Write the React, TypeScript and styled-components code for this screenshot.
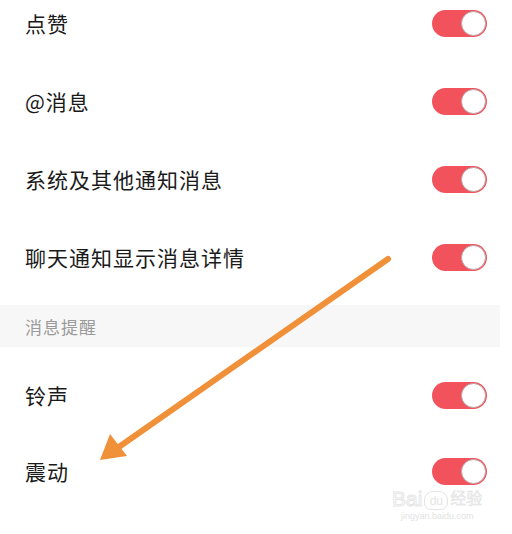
import styled, { createGlobalStyle } from 'styled-components';

const GlobalStyle = createGlobalStyle`
  html, body {
    margin: 0;
    padding: 0;
    background: #ffffff;
  }
  body {
    font-family: "Noto Sans CJK SC", "Noto Sans", sans-serif;
  }
`;

const Page = styled.div`
  position: relative;
  width: 512px;
  height: 534px;
  overflow: hidden;
  background: #ffffff;
`;

const List = styled.div`
  display: flex;
  flex-direction: column;
  margin-top: -16px;
`;

const Row = styled.div<{ $h?: number }>`
  height: ${p => p.$h ?? 78}px;
  display: flex;
  align-items: center;
  justify-content: space-between;
  padding: 0 25px 0 25px;
`;

const Label = styled.span`
  font-size: 21px;
  color: #1a1a1a;
  letter-spacing: 1px;
`;

const SectionHeader = styled.div`
  width: 500px;
  height: 42px;
  margin: 9px 0 10px;
  box-sizing: border-box;
  padding-left: 25px;
  display: flex;
  align-items: center;
  background: #f7f7f7;
  font-size: 17px;
  color: #9a9a9a;
  letter-spacing: 1px;
`;

const Track = styled.div`
  width: 55px;
  height: 27px;
  border-radius: 14px;
  background: #f2525b;
  display: flex;
  align-items: center;
  justify-content: flex-end;
  box-sizing: border-box;
  padding-right: 1px;
`;

const Knob = styled.div`
  width: 25px;
  height: 25px;
  border-radius: 50%;
  background: #ffffff;
  box-sizing: border-box;
  border: 1px solid #b9a6a8;
`;

const Arrow = styled.svg`
  position: absolute;
  left: 0;
  top: 0;
  pointer-events: none;
`;

const Watermark = styled.div`
  position: absolute;
  left: 392px;
  top: 488px;
  display: flex;
  flex-direction: column;
  align-items: center;
  font-family: "Liberation Sans", "Noto Sans CJK SC", sans-serif;
`;

const MarkTop = styled.div`
  display: flex;
  align-items: flex-end;
  gap: 2px;
  font-size: 21px;
  line-height: 22px;
  color: #ffffff;
  -webkit-text-stroke: 1px #e6e6e6;
`;

const Paw = styled.span`
  display: inline-flex;
  align-items: center;
  justify-content: center;
  width: 22px;
  height: 17px;
  border-radius: 9px 9px 7px 7px;
  border: 1px solid #e4e4e4;
  font-size: 12px;
  line-height: 12px;
  -webkit-text-stroke: 0;
  color: #e4e4e4;
`;

const Small = styled.span`
  font-size: 16px;
  color: #ececec;
  -webkit-text-stroke: 0.4px #e2e2e2;
`;

const MarkBottom = styled.div`
  font-size: 9px;
  line-height: 12px;
  color: #e2e2e2;
`;

const Toggle = () => (
  <Track>
    <Knob />
  </Track>
);

const topItems = ['点赞', '@消息', '系统及其他通知消息', '聊天通知显示消息详情'];
const bottomItems = ['铃声', '震动'];

const App = () => {
  return (
    <Page>
      <GlobalStyle />
      <List>
        {topItems.map(t => (
          <Row key={t}>
            <Label>{t}</Label>
            <Toggle />
          </Row>
        ))}
        <SectionHeader>消息提醒</SectionHeader>
        {bottomItems.map(t => (
          <Row key={t} $h={76}>
            <Label>{t}</Label>
            <Toggle />
          </Row>
        ))}
      </List>
      <Watermark>
        <MarkTop>
          <span>Bai</span>
          <Paw>du</Paw>
          <Small>经验</Small>
        </MarkTop>
        <MarkBottom>jingyan.baidu.com</MarkBottom>
      </Watermark>
      <Arrow width="512" height="534" viewBox="0 0 512 534">
        <line x1="388" y1="259" x2="116" y2="449" stroke="#f0913a" strokeWidth="6" strokeLinecap="round" />
        <polygon points="100,460 110,434 127,456" fill="#f0913a" />
      </Arrow>
    </Page>
  );
};

export default App;
